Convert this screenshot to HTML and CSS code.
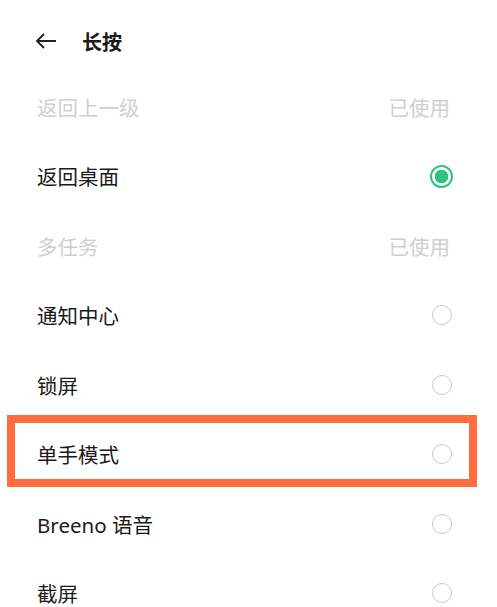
FILE: index.html
```html
<!DOCTYPE html>
<html lang="zh-CN">
<head>
  <meta charset="UTF-8">
  <meta name="viewport" content="width=device-width, initial-scale=1.0">
  <title>长按</title>
  <link rel="stylesheet" href="styles.css">
</head>
<body>
  <div class="header">
    <svg class="back" width="22" height="16" viewBox="0 0 22 16">
      <path d="M21 8H2M9 1L2 8l7 7" fill="none" stroke="#222" stroke-width="1.8"/>
    </svg>
    <span class="title">长按</span>
  </div>
  <ul class="list">
    <li class="row disabled"><span>返回上一级</span><span class="used">已使用</span></li>
    <li class="row"><span>返回桌面</span><span class="radio checked"></span></li>
    <li class="row disabled"><span>多任务</span><span class="used">已使用</span></li>
    <li class="row"><span>通知中心</span><span class="radio"></span></li>
    <li class="row"><span>锁屏</span><span class="radio"></span></li>
    <li class="row marked"><span>单手模式</span><span class="radio"></span></li>
    <li class="row"><span>Breeno 语音</span><span class="radio"></span></li>
    <li class="row"><span>截屏</span><span class="radio"></span></li>
  </ul>
</body>
</html>
```

FILE: styles.css
```css
body {
  margin: 0;
  background: #fff;
  font-family: "Noto Sans", "Noto Sans CJK SC", sans-serif;
  color: #1a1a1a;
}

.header {
  display: flex;
  align-items: center;
  padding: 10px 0 0 35px;
  box-sizing: border-box;
  height: 72px;
}

.back {
  display: block;
}

.title {
  margin-left: 25px;
  font-size: 20px;
  font-weight: 700;
}

.list {
  list-style: none;
  margin: 0;
  padding: 0;
}

.row {
  display: flex;
  align-items: center;
  justify-content: space-between;
  height: 69.5px;
  padding: 0 35px 0 37px;
  font-size: 20.5px;
  position: relative;
}

.disabled {
  color: #cfcfcf;
}

.used {
  color: #cfcfcf;
  margin-right: 12px;
}

.radio {
  width: 18px;
  height: 18px;
  border: 1.6px solid #c8c8c8;
  border-radius: 50%;
  box-sizing: content-box;
  margin-right: 10px;
}

.radio.checked {
  width: 19px;
  height: 19px;
  border: 2px solid #2cc57b;
  margin-right: 9px;
  background: radial-gradient(circle, #2cc57b 0 6.5px, #fff 7px);
}

/* highlight box around one row */
.marked::after {
  content: "";
  position: absolute;
  left: 7px;
  top: -5px;
  width: 470px;
  height: 72px;
  border: 8px solid #ff6d3f;
  box-sizing: border-box;
}
```
